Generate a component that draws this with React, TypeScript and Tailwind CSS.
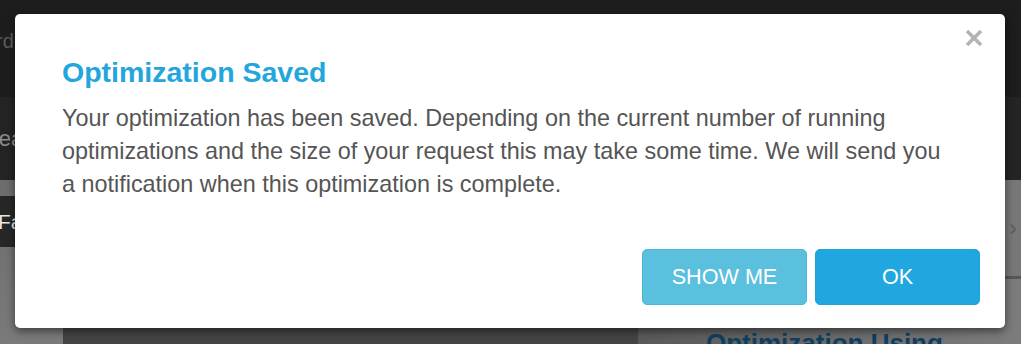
import React from "react";

export default function App() {
  return (
    <div
      className="relative w-[1021px] h-[344px] overflow-hidden bg-[#1c1c1c]"
      style={{ fontFamily: '"Liberation Sans", Arial, sans-serif' }}
    >
      {/* Background page */}
      <div className="flex flex-col h-full">
        <div className="h-[97px] bg-[#1d1d1d] flex items-start pt-[26px] gap-[38px] text-[20px] text-[#5c5c5c] whitespace-nowrap">
          <span className="-ml-[84px]">Dashboard</span>
          <span>Schedule</span>
          <span>Map</span>
          <span>Ads</span>
          <span>Reports</span>
          <span>Alerts</span>
          <span>Customers</span>
          <span>Assets</span>
          <span>Messages</span>
          <span className="ml-[36px]">Settings</span>
        </div>
        <div className="h-[83px] bg-[#242424] flex items-center text-[22px] text-[#8a8a8a] whitespace-nowrap">
          <span className="-ml-[16px]">Search</span>
        </div>
        <div className="flex-1 flex">
          <div className="w-[63px] flex flex-col bg-gradient-to-b from-[#6c6c6c] to-[#7a7a7a]">
            <div className="h-[16px]" />
            <div className="h-[51px] w-[107px] bg-[#272727] rounded-r-[26px] flex items-center text-[21px] text-[#e6e6e6] relative z-0">
              <span className="-ml-[2px]">Favorites</span>
            </div>
          </div>
          <div className="flex-1 flex flex-col">
            <div className="h-[96px]" />
            <div className="flex-1 bg-[#444444]" />
          </div>
          <div className="w-[383px] flex flex-col">
            <div className="h-[96px] bg-[#777777] flex items-center justify-end pr-[4px] text-[24px] text-[#5e5e5e]">
              ›
            </div>
            <div className="h-[3px] bg-[#555555]" />
            <div className="flex-1 bg-gradient-to-r from-[#595959] to-[#7c7c7c] flex items-end pl-[68px] text-[26px] font-bold text-[#0f3f5e] leading-[30px] whitespace-nowrap">
              <span className="-mb-[14px]">Optimization Using</span>
            </div>
          </div>
        </div>
      </div>

      {/* Modal */}
      <div className="absolute left-[15px] top-[14px] w-[990px] h-[314px] bg-white rounded-[5px] shadow-[0_3px_9px_rgba(0,0,0,0.5)] flex flex-col pl-[47px] pr-[25px] pt-[41px] pb-[23px]">
        <button className="absolute right-[22px] top-[15px] w-[18px] h-[18px]" aria-label="Close">
          <svg width="18" height="18" viewBox="0 0 18 18">
            <path d="M2 2 L16 16 M16 2 L2 16" stroke="#b4b4b4" strokeWidth="3.6" strokeLinecap="butt" />
          </svg>
        </button>
        <h2 className="text-[28.5px] leading-[34px] font-bold text-[#22a6dd]">Optimization Saved</h2>
        <p className="mt-[13px] w-[888px] text-[23.4px] leading-[33px] text-[#555555]">
          Your optimization has been saved. Depending on the current number of running optimizations and the size of your request this may take some time. We will send you a notification when this optimization is complete.
        </p>
        <div className="mt-auto flex justify-end gap-[8px]">
          <button className="w-[165px] h-[56px] rounded-[5px] bg-[#5bc0de] border border-[#46b8da] text-white text-[21.6px]">
            SHOW ME
          </button>
          <button className="w-[165px] h-[56px] rounded-[5px] bg-[#21a7df] border border-[#1fa2d9] text-white text-[21.6px]">
            OK
          </button>
        </div>
      </div>
    </div>
  );
}
